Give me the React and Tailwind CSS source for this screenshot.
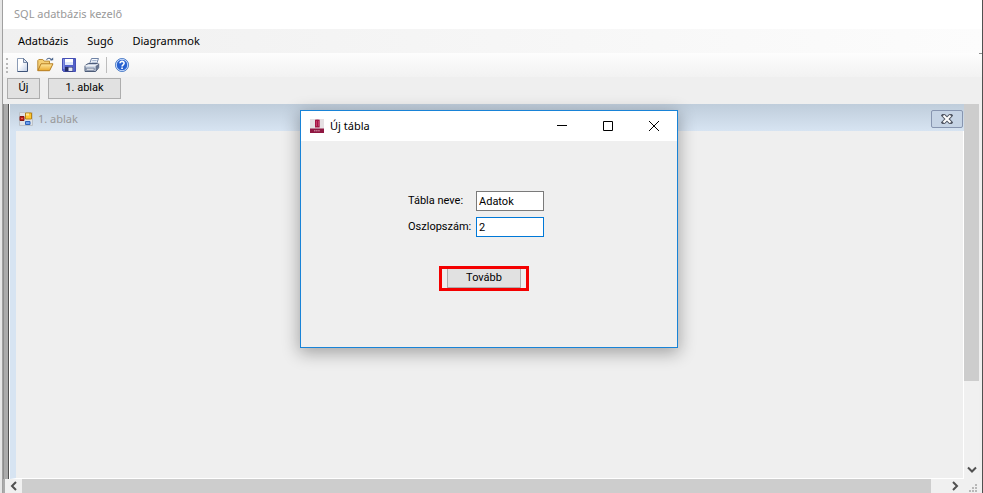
import React, { useState } from "react";

const ui = "font-['Noto_Sans','Open_Sans',sans-serif]";
const small = "font-['Roboto','Liberation_Sans',sans-serif]";

function NewIcon() {
  return (
    <svg width="16" height="16" viewBox="0 0 16 16">
      <defs>
        <linearGradient id="page" x1="0" y1="0" x2="1" y2="1">
          <stop offset="0.4" stopColor="#ffffff" />
          <stop offset="1" stopColor="#bccbe4" />
        </linearGradient>
      </defs>
      <path d="M2.5 1.5h6l4 4v9h-10z" fill="url(#page)" />
      <path d="M2.5 14.5v-13h6" fill="none" stroke="#8b9bb5" />
      <path d="M8.5 1.5l4 4v9h-10" fill="none" stroke="#3d5378" />
      <path d="M8.5 1.5v4h4z" fill="#dbe4f2" stroke="#5c7093" strokeWidth="0.8" />
    </svg>
  );
}

function OpenIcon() {
  return (
    <svg width="17" height="16" viewBox="0 0 17 16">
      <defs>
        <linearGradient id="folder" x1="0" y1="0" x2="0" y2="1">
          <stop offset="0" stopColor="#ffe9a0" />
          <stop offset="1" stopColor="#eaa82c" />
        </linearGradient>
      </defs>
      <path d="M.8 13.5v-10l1-1h4l1.4 1.6h5.3v3" fill="#f5cf74" stroke="#b98a35" />
      <path d="M.8 13.7L4 6.8h12L12.6 13.7z" fill="url(#folder)" stroke="#b57d20" />
      <path d="M9.5 2.8c1.5-2.3 4.2-2 5 .5" fill="none" stroke="#4e688f" strokeWidth="1.1" />
      <path d="M12.5 3.2h3.7V.4z" fill="#4e688f" />
    </svg>
  );
}

function SaveIcon() {
  return (
    <svg width="16" height="16" viewBox="0 0 16 16">
      <path d="M1.5 1.5h13v13h-12l-1-1z" fill="#5260c8" stroke="#4650b4" />
      <path d="M4 2h8v6H4z" fill="#e0e9fb" />
      <path d="M4 2h8v3H4z" fill="#ffffff" />
      <path d="M4 10h8v4.5H4z" fill="#252d66" />
      <path d="M7.5 10.5h4V14h-4z" fill="#e3e7f5" />
      <path d="M2 2h1.5v10H2z" fill="#8290e5" />
    </svg>
  );
}

function PrintIcon() {
  return (
    <svg width="16" height="16" viewBox="0 0 16 16">
      <path d="M5.5 7L7.5 1.5h7L12.5 7z" fill="#f6f9fe" stroke="#6f83a5" />
      <path d="M8.2 3.5h4.5M7.5 5.3H12" stroke="#91a4c2" strokeWidth="0.8" />
      <path d="M1 8.7l3.2-2.2h10.5v4.2l-3 3.8H1z" fill="#c5cfdf" stroke="#4d5c78" />
      <path d="M1.2 8.8h10.3l3-2.3" fill="none" stroke="#fff" />
      <path d="M2.2 11.2h8v2h-8z" fill="#fff" stroke="#606f8c" strokeWidth="0.8" />
      <path d="M11.7 9v5.2l2.8-3.5V7z" fill="#65748f" />
    </svg>
  );
}

function HelpIcon() {
  return (
    <svg width="16" height="16" viewBox="0 0 16 16">
      <circle cx="8" cy="8" r="6.5" fill="#2862d0" stroke="#4f7fc7" />
      <circle cx="8" cy="8" r="5.7" fill="none" stroke="#d8e8ff" strokeWidth="0.9" />
      <path d="M6 6.3c0-2.7 4.2-2.4 4.1 0 0 1.5-2 1.5-2 3.1" fill="none" stroke="#fff" strokeWidth="1.6" />
      <path d="M7.2 10.4h1.7V12H7.2z" fill="#fff" />
    </svg>
  );
}

function FormIcon() {
  return (
    <svg width="14" height="14" viewBox="0 0 14 14">
      <path d="M.5 .5h13v13H.5z" fill="#dfe3e6" stroke="#bcc2c8" />
      <path d="M1 4.5h4v4H1z" fill="#cb2018" stroke="#851610" />
      <path d="M2.5 6h1v1h-1z" fill="#f6a79a" />
      <path d="M6.5 1h6v6h-6z" fill="#ffc832" stroke="#b88416" />
      <path d="M7 1.5h3v2H7z" fill="#ffe79a" />
      <path d="M6.5 9.5h4.5v3H6.5z" fill="#6da0f0" stroke="#2d61b8" />
    </svg>
  );
}

function DatabaseIcon() {
  return (
    <svg width="14" height="14" viewBox="0 0 14 14">
      <path d="M0 0h14v14H0z" fill="#e5e0e3" />
      <path d="M5 .8Q7 0 9.7 .8v7.7H5z" fill="#a31543" />
      <path d="M6.5 2v5M8.5 2v5" stroke="#c23a68" />
      <path d="M0 9.5h14V14H0z" fill="#8f1741" />
      <path d="M4 11.8h6" stroke="#dba5b9" strokeDasharray="1.5 .6" />
    </svg>
  );
}

function Chevron({ d }) {
  return (
    <svg width="10" height="10" viewBox="0 0 10 10" fill="none" stroke="#505050" strokeWidth="2">
      <path d={d} />
    </svg>
  );
}

function ToolButton({ label, children }) {
  return (
    <button type="button" aria-label={label} className="flex size-[23px] items-center justify-center">
      {children}
    </button>
  );
}

function Field({ id, label, value, onChange, border }) {
  return (
    <div className="flex items-center">
      <label htmlFor={id} className="w-[68px]">{label}</label>
      <input
        id={id}
        value={value}
        onChange={(e) => onChange(e.target.value)}
        className={`h-5 w-[68px] border bg-white px-0.5 outline-none ${border}`}
      />
    </div>
  );
}

function NewTableDialog() {
  const [name, setName] = useState("Adatok");
  const [columns, setColumns] = useState("2");
  const caption = "flex h-[30px] w-[46px] items-center justify-center";
  return (
    <section
      role="dialog"
      aria-label="Új tábla"
      className="absolute top-[110px] left-[300px] flex h-[238px] w-[378px] flex-col border border-[#1883d7] bg-[#efefef] shadow-[0_4px_16px_1px_rgba(0,0,0,0.32)]"
    >
      <header className="flex h-[30px] shrink-0 items-center bg-white pl-[9px]">
        <DatabaseIcon />
        <h2 className={`ml-1.5 flex-1 text-[11px] ${ui}`}>Új tábla</h2>
        <button type="button" aria-label="Kis méret" className={caption}>
          <svg width="11" height="11" stroke="#000"><path d="M0 4.5h10" /></svg>
        </button>
        <button type="button" aria-label="Teljes méret" className={caption}>
          <svg width="11" height="11" fill="none" stroke="#000"><path d="M.5 .5h9v9h-9z" /></svg>
        </button>
        <button type="button" aria-label="Bezárás" className={caption}>
          <svg width="11" height="11" stroke="#000"><path d="M0 0l10 10M10 0l-10 10" /></svg>
        </button>
      </header>
      <form onSubmit={(e) => e.preventDefault()} className={`flex flex-col pt-[50px] text-[11px] ${small}`}>
        <div className="ml-[107px] flex flex-col gap-1.5">
          <Field id="table-name" label="Tábla neve:" value={name} onChange={setName} border="border-[#7a7a7a]" />
          <Field id="column-count" label="Oszlopszám:" value={columns} onChange={setColumns} border="border-[#0078d7]" />
        </div>
        <div className="mt-[29px] ml-[138px] flex h-[25px] w-[90px] justify-center border-3 border-[#f40000]">
          <button type="submit" className="w-[74px] border-x border-b border-[#adadad] bg-[#e1e1e1]">Tovább</button>
        </div>
      </form>
    </section>
  );
}

export default function App() {
  const action = "h-[21px] border border-[#adadad] bg-[#e1e1e1] text-[11px]";
  return (
    <div className={`relative flex h-screen overflow-hidden border-r border-[#505050] bg-[#e6e6e6] pl-0.5 text-black ${ui}`}>
      <main className="flex min-w-0 flex-1 flex-col border-l border-[#a0a0a0] bg-[#efefef]">
        <header className="flex h-[29px] shrink-0 items-center bg-white pl-[11px]">
          <h1 className="text-[11px] text-[#999999]">SQL adatbázis kezelő</h1>
        </header>
        <nav className="flex h-6 shrink-0 items-center gap-[19px] bg-linear-to-r from-[#f0f0f0] to-[#fcfcfc] pl-[15px] text-[11px]">
          <button type="button">Adatbázis</button>
          <button type="button">Sugó</button>
          <button type="button">Diagrammok</button>
        </nav>
        <div role="toolbar" aria-label="Eszköztár" className="flex h-6 shrink-0 items-center bg-linear-to-b from-[#fdfdfd] to-[#f2f2f2] pl-[3px]">
          <span className="h-[15px] border-l-2 border-dotted border-[#b8b8b8]" />
          <span className="w-[3px]" />
          <ToolButton label="Új"><NewIcon /></ToolButton>
          <ToolButton label="Megnyitás"><OpenIcon /></ToolButton>
          <ToolButton label="Mentés"><SaveIcon /></ToolButton>
          <ToolButton label="Nyomtatás"><PrintIcon /></ToolButton>
          <span className="mx-[3px] h-4 border-l border-[#bdbdbd]" />
          <ToolButton label="Súgó"><HelpIcon /></ToolButton>
          <span className="ml-auto h-px w-[3px] self-start bg-[#8c8c8c]" />
        </div>
        <div className={`flex h-[27px] shrink-0 items-start gap-2 pt-px pl-1 ${small}`}>
          <button type="button" className={`w-[33px] ${action}`}>Új</button>
          <button type="button" className={`w-[73px] ${action}`}>1. ablak</button>
        </div>

        <div className="flex min-h-0 flex-1">
          <div className="w-1.5 shrink-0 border-r border-l border-r-[#505050] border-l-[#8c8c8c] bg-[#ababab]" />
          <section className="flex min-w-0 flex-1 flex-col border-l border-white">
            <header className="flex h-[27px] shrink-0 items-center bg-linear-to-b from-[#bfcddb] to-[#d7e4f2] pt-[3px] pr-px pl-[9px]">
              <FormIcon />
              <h2 className="ml-[5px] flex-1 text-[11px] text-[#999999]">1. ablak</h2>
              <button type="button" aria-label="Ablak bezárása" className="flex h-[18px] w-8 items-center justify-center rounded-xs border border-[#8795b0] bg-[#c6d4e5]">
                <svg width="12" height="10" viewBox="0 0 12 10">
                  <path d="M2.5 1.5l7 7M9.5 1.5l-7 7" stroke="#535966" strokeWidth="4" strokeLinecap="square" />
                  <path d="M2.5 1.5l7 7M9.5 1.5l-7 7" stroke="#fff" strokeWidth="2" />
                </svg>
              </button>
            </header>
            <div className="flex-1 border-r border-b border-l-6 border-white border-l-[#d7e4f2]" />
          </section>
          <div className="flex w-[15px] shrink-0 flex-col items-center justify-between bg-[#f0f0f0]">
            <div className="h-[277px] w-full bg-[#cdcdcd]" />
            <button type="button" aria-label="Görgetés le" className="mb-1"><Chevron d="M1 2.5l4 4 4-4" /></button>
          </div>
          <div className="w-[3px] shrink-0" />
        </div>

        <div className="flex h-[14px] shrink-0 items-center border-l-2 border-[#ababab] bg-[#f0f0f0]">
          <button type="button" aria-label="Görgetés balra" className="flex w-[17px] justify-center"><Chevron d="M7 1L3 5l4 4" /></button>
          <div className="mr-[19px] h-full flex-1 bg-[#cdcdcd]" />
          <button type="button" aria-label="Görgetés jobbra" className="mr-[7px]"><Chevron d="M3 1l4 4-4 4" /></button>
          <svg width="15" height="14" fill="#b8b8b8">
            <path d="M8 5h2v2H8zM5 8h2v2H5zM8 8h2v2H8zM2 11h2v2H2zM5 11h2v2H5zM8 11h2v2H8z" />
          </svg>
        </div>
      </main>
      <NewTableDialog />
    </div>
  );
}
